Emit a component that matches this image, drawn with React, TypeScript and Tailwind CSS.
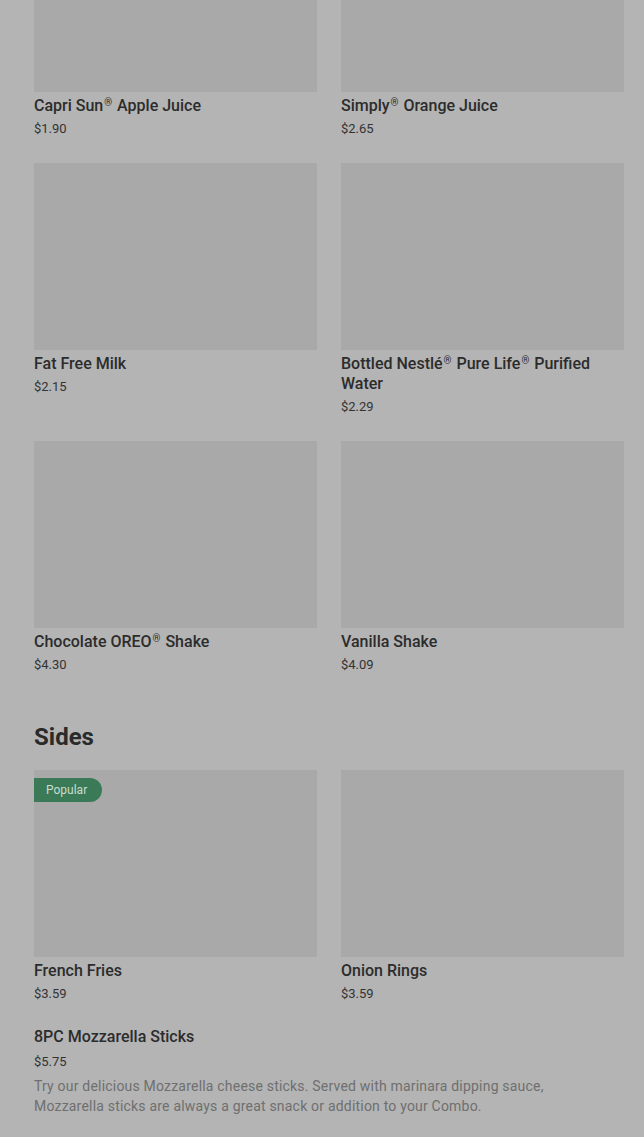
import React from "react";

type Item = {
  name: string;
  price: string;
  badge?: string;
};

const drinks: Item[] = [
  { name: "Capri Sun® Apple Juice", price: "$1.90" },
  { name: "Simply® Orange Juice", price: "$2.65" },
  { name: "Fat Free Milk", price: "$2.15" },
  { name: "Bottled Nestlé® Pure Life® Purified Water", price: "$2.29" },
  { name: "Chocolate OREO® Shake", price: "$4.30" },
  { name: "Vanilla Shake", price: "$4.09" },
];

const sides: Item[] = [
  { name: "French Fries", price: "$3.59", badge: "Popular" },
  { name: "Onion Rings", price: "$3.59" },
];

// small raised ® like the menu shows
const Name: React.FC<{ text: string }> = ({ text }) => (
  <>
    {text.split("®").map((part, i, arr) => (
      <React.Fragment key={i}>
        {part}
        {i < arr.length - 1 && (
          <span className="inline-block align-top text-[10px] leading-[12px] ml-[1px] mr-[1px] mt-[1px]">®</span>
        )}
      </React.Fragment>
    ))}
  </>
);

const ItemCard: React.FC<{ item: Item }> = ({ item }) => (
  <div className="flex flex-col">
    <div className="relative h-[187px] w-full bg-[#a9a9a9]">
      {item.badge && (
        <span className="absolute left-0 top-2 h-6 pl-3 pr-[15px] rounded-r-full bg-[#3b7a56] text-[#c9dccf] text-xs leading-6">
          {item.badge}
        </span>
      )}
    </div>
    <h3 className="mt-1 text-base leading-5 font-medium text-[#2c2c2c]">
      <Name text={item.name} />
    </h3>
    <p className="mt-[3px] text-[13px] leading-5 text-[#333333]">{item.price}</p>
  </div>
);

export default function App() {
  return (
    <div
      className="min-h-screen w-full overflow-hidden bg-[#b4b4b4]"
      style={{ fontFamily: "Roboto, 'Liberation Sans', sans-serif" }}
    >
      <div className="-mt-[95px] pl-[34px] pr-5 pb-10">
        <div className="grid grid-cols-2 gap-x-6 gap-y-6">
          {drinks.map((d) => (
            <ItemCard key={d.name} item={d} />
          ))}
        </div>

        <h2 className="mt-[46px] mb-[17px] text-2xl leading-8 font-bold text-[#2a2a2a]">Sides</h2>

        <div className="grid grid-cols-2 gap-x-6">
          {sides.map((s) => (
            <ItemCard key={s.name} item={s} />
          ))}
        </div>

        <div className="mt-[23px] pr-[40px]">
          <h3 className="text-base leading-5 font-medium text-[#2c2c2c]">8PC Mozzarella Sticks</h3>
          <p className="mt-[5px] text-[13px] leading-5 text-[#333333]">$5.75</p>
          <p className="mt-1 text-sm leading-5 tracking-[0.2px] text-[#6f6f6f]">
            Try our delicious Mozzarella cheese sticks. Served with marinara dipping sauce, Mozzarella sticks
            are always a great snack or addition to your Combo.
          </p>
        </div>
      </div>
    </div>
  );
}
